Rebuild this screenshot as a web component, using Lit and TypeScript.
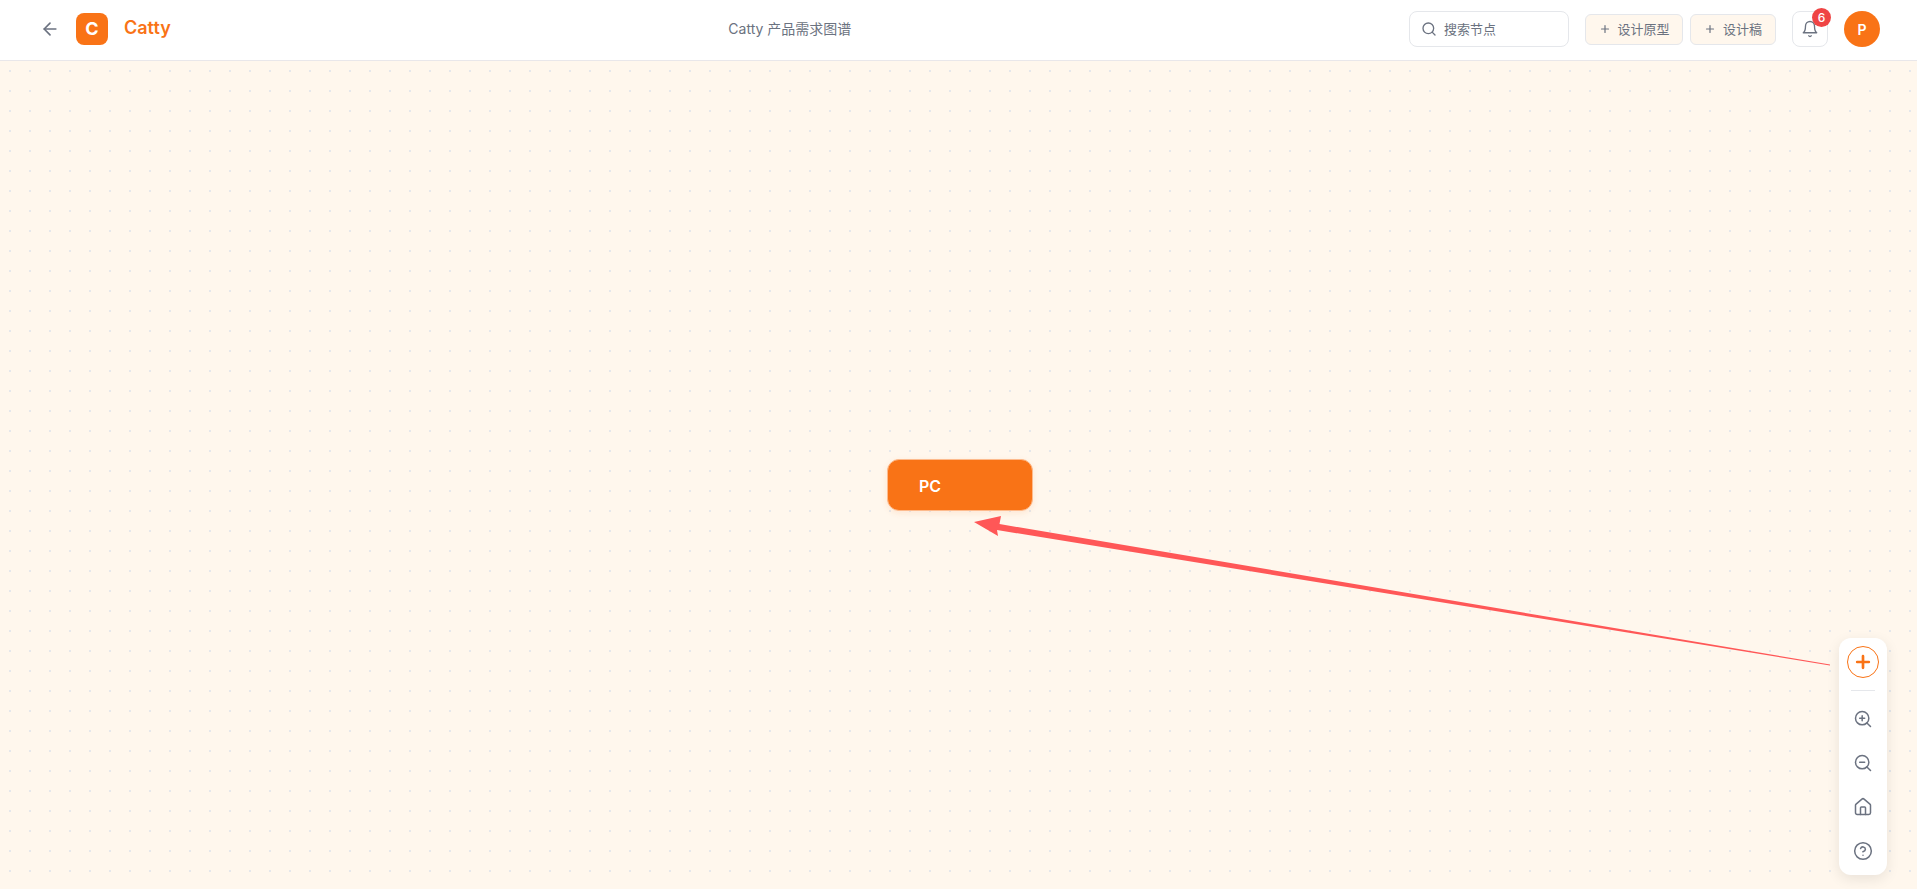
import { LitElement, html, css, svg } from "lit";
import { customElement } from "lit/decorators.js";

const icon = (body: unknown, size = 24, sw = 2) => html`<svg width=${size} height=${size} viewBox="0 0 24 24" fill="none" stroke="currentColor" stroke-width=${sw} stroke-linecap="round" stroke-linejoin="round">${body}</svg>`;

@customElement("app-root")
export class AppRoot extends LitElement {
  static styles = css`
    :host { display: block; width: 100%; height: 889px; overflow: hidden; font-family: Inter, "Noto Sans CJK SC", sans-serif; }
    .page { display: flex; flex-direction: column; height: 889px; }
    header { height: 58px; box-sizing: content-box; flex: none; display: flex; align-items: center; justify-content: space-between; padding: 0 37px 2px 36px; background: #fff; border-bottom: 1px solid #e9e7ea; }
    .left, .right { display: flex; align-items: center; }
    .back { width: 28px; height: 28px; display: flex; align-items: center; justify-content: center; color: #6b7280; margin-right: 12px; }
    .logo { width: 32px; height: 32px; box-sizing: border-box; padding-bottom: 2px; border-radius: 8px; background: #f97316; color: #fff; font-weight: 700; font-size: 18px; display: flex; align-items: center; justify-content: center; margin-right: 16px; }
    .brand { font-size: 18px; line-height: 22px; padding-bottom: 2px; font-weight: 600; color: #f97316; }
    .title { font-size: 14px; line-height: 20px; color: #6b7280; font-weight: 400; }
    .search { width: 160px; height: 36px; box-sizing: border-box; border: 1px solid #e5e7eb; border-radius: 8px; display: flex; align-items: center; gap: 7px; padding: 0 11px; color: #6b7280; font-size: 13px; line-height: 18px; margin-right: 16px; background: #fff; }
    .btn { height: 31px; box-sizing: border-box; border: 1px solid #e5e7eb; border-radius: 6px; background: #fff7ed; color: #6b7280; font-size: 13px; line-height: 18px; display: flex; align-items: center; gap: 6.5px; padding: 0 13px; margin-right: 7px; }
    .btn.last { margin-right: 16px; }
    .bell { position: relative; width: 36px; height: 36px; box-sizing: border-box; border: 1px solid #e5e7eb; border-radius: 8px; display: flex; align-items: center; justify-content: center; color: #6b7280; margin-right: 16px; }
    .badge { position: absolute; top: -4px; right: -4px; width: 19px; height: 19px; border-radius: 50%; background: #ef4444; color: #fff; font-size: 12px; font-weight: 500; display: flex; align-items: center; justify-content: center; }
    .avatar { width: 36px; height: 36px; border-radius: 50%; background: #f97316; color: #fff; font-weight: 600; font-size: 14px; display: flex; align-items: center; justify-content: center; }
    .canvas { position: relative; flex: 1; background-color: #fff7ed; background-image: radial-gradient(circle at center, #e5e7eb 0, #e5e7eb 1.2px, transparent 1.4px); background-size: 20px 20px; background-position: 0 0; }
    .node { position: absolute; left: 887px; top: 398px; width: 146px; height: 52px; box-sizing: border-box; border-radius: 12px; background: #f97316; color: #fff; font-size: 16px; font-weight: 600; display: flex; align-items: center; padding: 1px 0 0 31px; border: 1px solid #fdba8c; box-shadow: 0 2px 6px rgba(249,115,22,.12); }
    .arrow { position: absolute; left: 0; top: 0; width: 1917px; height: 828px; pointer-events: none; }
    .tools { position: absolute; left: 1839px; top: 577px; width: 48px; height: 237px; border-radius: 12px; background: #fff; box-shadow: 0 4px 14px rgba(0,0,0,.09); display: flex; flex-direction: column; align-items: center; padding-top: 8px; box-sizing: border-box; color: #6b7280; }
    .add { width: 32px; height: 32px; flex: none; box-sizing: border-box; border-radius: 50%; border: 1px solid #f97316; color: #f97316; display: flex; align-items: center; justify-content: center; }
    .sep { width: 24px; height: 1px; flex: none; background: #e5e7eb; margin: 12px 0 18px; }
    .list { display: flex; flex-direction: column; gap: 24px; }
    .tool { width: 20px; height: 20px; }
  `;

  render() {
    return html`<div class="page">
      <header>
        <div class="left">
          <div class="back">${icon(svg`<path d="M19 12H5"/><path d="M12 19l-7-7 7-7"/>`, 20, 2)}</div>
          <div class="logo">C</div>
          <div class="brand">Catty</div>
        </div>
        <div class="title">Catty 产品需求图谱</div>
        <div class="right">
          <div class="search">${icon(svg`<circle cx="11" cy="11" r="8"/><path d="M21 21l-4.3-4.3"/>`, 16, 2)}<span>搜索节点</span></div>
          <div class="btn">${icon(svg`<path d="M12 5v14M5 12h14"/>`, 12, 2.4)}<span>设计原型</span></div>
          <div class="btn last">${icon(svg`<path d="M12 5v14M5 12h14"/>`, 12, 2.4)}<span>设计稿</span></div>
          <div class="bell">${icon(svg`<path d="M6 8a6 6 0 0 1 12 0c0 7 3 9 3 9H3s3-2 3-9"/><path d="M10.3 21a1.94 1.94 0 0 0 3.4 0"/>`, 18, 1.8)}<span class="badge">6</span></div>
          <div class="avatar">P</div>
        </div>
      </header>
      <div class="canvas">
        <div class="node">PC</div>
        <svg class="arrow" viewBox="0 61 1917 828">
          <polygon fill="#ff5757" points="974,522 1001,516 999.5,524 1830,664.5 1830,665.5 997,530 998,536"/>
        </svg>
        <div class="tools">
          <div class="add">${icon(svg`<path d="M12 5v14M5 12h14"/>`, 20, 3.2)}</div>
          <div class="sep"></div>
          <div class="list">
            <div class="tool">${icon(svg`<circle cx="11" cy="11" r="8"/><path d="M21 21l-4.3-4.3M11 8v6M8 11h6"/>`, 20, 1.8)}</div>
            <div class="tool">${icon(svg`<circle cx="11" cy="11" r="8"/><path d="M21 21l-4.3-4.3M8 11h6"/>`, 20, 1.8)}</div>
            <div class="tool">${icon(svg`<path d="M3 10a2 2 0 0 1 .7-1.5l7-6a2 2 0 0 1 2.6 0l7 6A2 2 0 0 1 21 10v9a2 2 0 0 1-2 2H5a2 2 0 0 1-2-2z"/><path d="M15 21v-8a1 1 0 0 0-1-1h-4a1 1 0 0 0-1 1v8"/>`, 20, 1.8)}</div>
            <div class="tool">${icon(svg`<circle cx="12" cy="12" r="10"/><path d="M9.1 9a3 3 0 0 1 5.8 1c0 2-3 3-3 3M12 17h.01"/>`, 20, 1.8)}</div>
          </div>
        </div>
      </div>
    </div>`;
  }
}
